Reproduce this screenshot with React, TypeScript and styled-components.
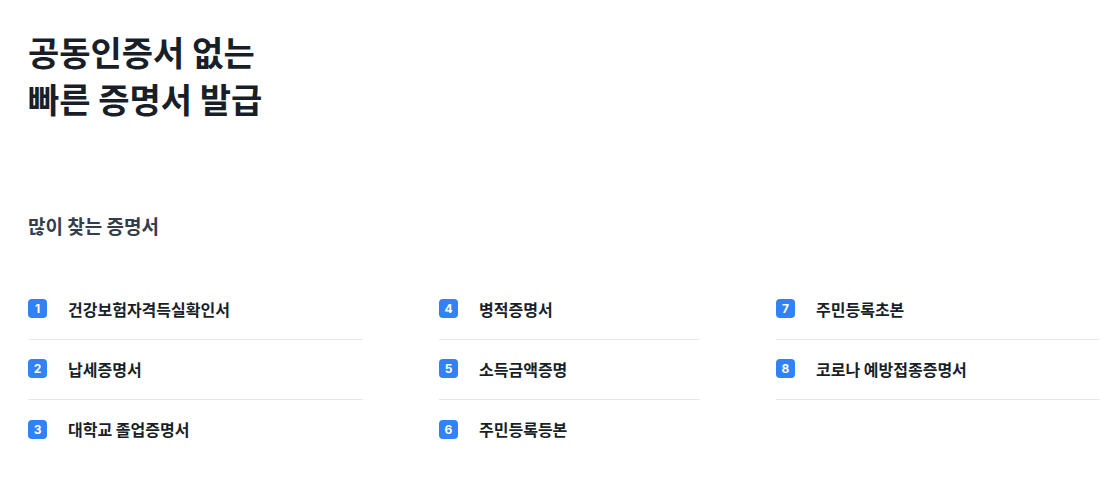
import styled, { createGlobalStyle } from "styled-components";

const GlobalStyle = createGlobalStyle`
  body {
    margin: 0;
    background: #ffffff;
    font-family: "Noto Sans CJK KR", "Noto Sans", sans-serif;
  }
`;

const Page = styled.div`
  padding: 28px 20px 40px 28px;
`;

const Title = styled.h1`
  margin: 0;
  font-size: 34px;
  line-height: 47px;
  font-weight: 700;
  color: #191f28;
`;

const SectionTitle = styled.h2`
  margin: 91px 0 0;
  font-size: 19px;
  line-height: 26px;
  font-weight: 700;
  color: #333d4b;
`;

const Grid = styled.ul`
  list-style: none;
  margin: 41px 0 0;
  padding: 0;
  display: grid;
  grid-template-columns: 335px 261px 324px;
  grid-auto-flow: column;
  grid-template-rows: repeat(3, 60px);
  column-gap: 76px;
`;

const Item = styled.li<{ $last: boolean }>`
  display: flex;
  align-items: center;
  gap: 21px;
  padding-bottom: 2px;
  border-bottom: ${(p) => (p.$last ? "none" : "1px solid #e5e8eb")};
`;

const Badge = styled.span`
  display: flex;
  align-items: center;
  justify-content: center;
  width: 19px;
  height: 19px;
  border-radius: 4px;
  background: #3182f6;
  color: #ffffff;
  font-family: "Inter", "Liberation Sans", sans-serif;
  font-size: 12px;
  font-weight: 700;
`;

const Label = styled.span`
  font-size: 16px;
  font-weight: 700;
  color: #191f28;
`;

const items = [
  "건강보험자격득실확인서",
  "납세증명서",
  "대학교 졸업증명서",
  "병적증명서",
  "소득금액증명",
  "주민등록등본",
  "주민등록초본",
  "코로나 예방접종증명서",
];

const App = () => {
  return (
    <>
      <GlobalStyle />
      <Page>
        <Title>
          공동인증서 없는
          <br />
          빠른 증명서 발급
        </Title>
        <SectionTitle>많이 찾는 증명서</SectionTitle>
        <Grid>
          {items.map((name, i) => (
            <Item key={name} $last={i % 3 === 2}>
              <Badge>{i + 1}</Badge>
              <Label>{name}</Label>
            </Item>
          ))}
        </Grid>
      </Page>
    </>
  );
};

export default App;
